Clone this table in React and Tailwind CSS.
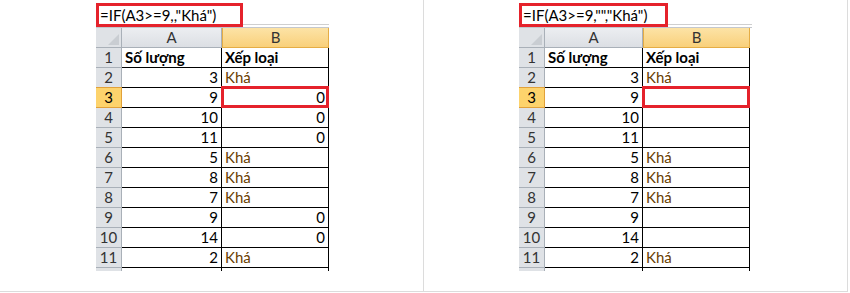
import React from "react";

const FONT = { fontFamily: 'Lato, "Noto Sans", "Liberation Sans", sans-serif' };

const LEFT_ROWS = [
  ["Số lượng", "Xếp loại", true],
  [3, "Khá"],
  [9, 0],
  [10, 0],
  [11, 0],
  [5, "Khá"],
  [8, "Khá"],
  [7, "Khá"],
  [9, 0],
  [14, 0],
  [2, "Khá"],
];

const RIGHT_ROWS = [
  ["Số lượng", "Xếp loại", true],
  [3, "Khá"],
  [9, ""],
  [10, ""],
  [11, ""],
  [5, "Khá"],
  [8, "Khá"],
  [7, "Khá"],
  [9, ""],
  [14, ""],
  [2, "Khá"],
];

export default function App() {
  return (
    <div className="w-[850px] h-[293px] bg-white flex" style={FONT}>
      <Panel
        formula={'=IF(A3>=9,,"Khá")'}
        rows={LEFT_ROWS}
        pad="pl-[96px]"
        boxW="w-[147px]"
        colA="w-[100px]"
      />
      <Panel
        formula={'=IF(A3>=9,"","Khá")'}
        rows={RIGHT_ROWS}
        pad="pl-[95px]"
        boxW="w-[149px]"
        colA="w-[98px]"
      />
    </div>
  );
}

function Panel({ formula, rows, pad, boxW, colA }) {
  return (
    <div className={`w-[424px] h-[292px] border-r border-b border-[#dcdcdc] ${pad} pt-[3px]`}>
      <div className="w-[233px]">
        {/* formula bar, highlighted */}
        <div className="flex items-start h-[24px]">
          <div className={`${boxW} h-[24px] shrink-0 border-[3px] border-[#e5222b] bg-white flex items-center pl-[1px] text-[15px] leading-none text-black whitespace-nowrap`}>
            {formula}
          </div>
          <div className="flex-1 h-[22px] border-b border-[#cfcfcf]" />
        </div>

        {/* column headers */}
        <div className="flex h-[21px] border-t border-[#c4c7cc]">
          <div className="w-[26px] shrink-0 bg-[#dfe2e6] border-r border-b border-[#a9b0b8] relative">
            <span className="absolute right-[2px] bottom-[2px] w-0 h-0 border-l-[11px] border-l-transparent border-b-[11px] border-b-[#c9cdd2]" />
          </div>
          <div className={`${colA} shrink-0 bg-gradient-to-b from-[#eceef1] to-[#dcdfe4] border-r border-b border-[#a9b0b8] flex items-center justify-center text-[15px] text-[#333]`}>
            A
          </div>
          <div className="w-[107px] shrink-0 bg-gradient-to-b from-[#fce3a6] to-[#f9d07a] border border-t-0 border-[#e5ad45] flex items-center justify-center text-[15px] text-[#333]">
            B
          </div>
        </div>

        {rows.map((r, i) => (
          <Row key={i} n={i + 1} a={r[0]} b={r[1]} bold={r[2]} colA={colA} />
        ))}

        {/* start of row 12 */}
        <div className="flex h-[3px]">
          <div className="w-[26px] shrink-0 bg-[#dfe2e6] border-r border-[#a9b0b8]" />
          <div className={`${colA} shrink-0 border-r border-black`} />
          <div className="w-[107px] shrink-0 border-r border-black" />
        </div>
      </div>
    </div>
  );
}

function Row({ n, a, b, bold, colA }) {
  const active = n === 3;
  const isText = typeof b === "string";
  return (
    <div className="flex h-[20px]">
      <div
        className={`w-[26px] shrink-0 flex items-center justify-center text-[15px] border-r border-b ${
          active ? "bg-[#fdd36c] border-[#e1a13a] border-t -mt-px h-[21px]" : "bg-[#dfe2e6] text-[#333] border-[#a9b0b8]"
        }`}
      >
        {n}
      </div>
      <div
        className={`${colA} shrink-0 border-r border-b border-black flex items-center px-[3px] text-[15px] text-black ${
          bold ? "justify-start font-bold" : "justify-end"
        }`}
      >
        {a}
      </div>
      <div className="w-[107px] shrink-0 border-r border-b border-black relative flex items-center px-[3px] text-[15px]">
        {active && <span className="absolute -left-px -top-[2px] -right-px -bottom-px border-[3px] border-[#e5222b]" />}
        {bold ? (
          <span className="font-bold text-black">{b}</span>
        ) : isText ? (
          <span className="text-[#694000]">{b}</span>
        ) : (
          <span className="ml-auto text-black">{b}</span>
        )}
      </div>
    </div>
  );
}
